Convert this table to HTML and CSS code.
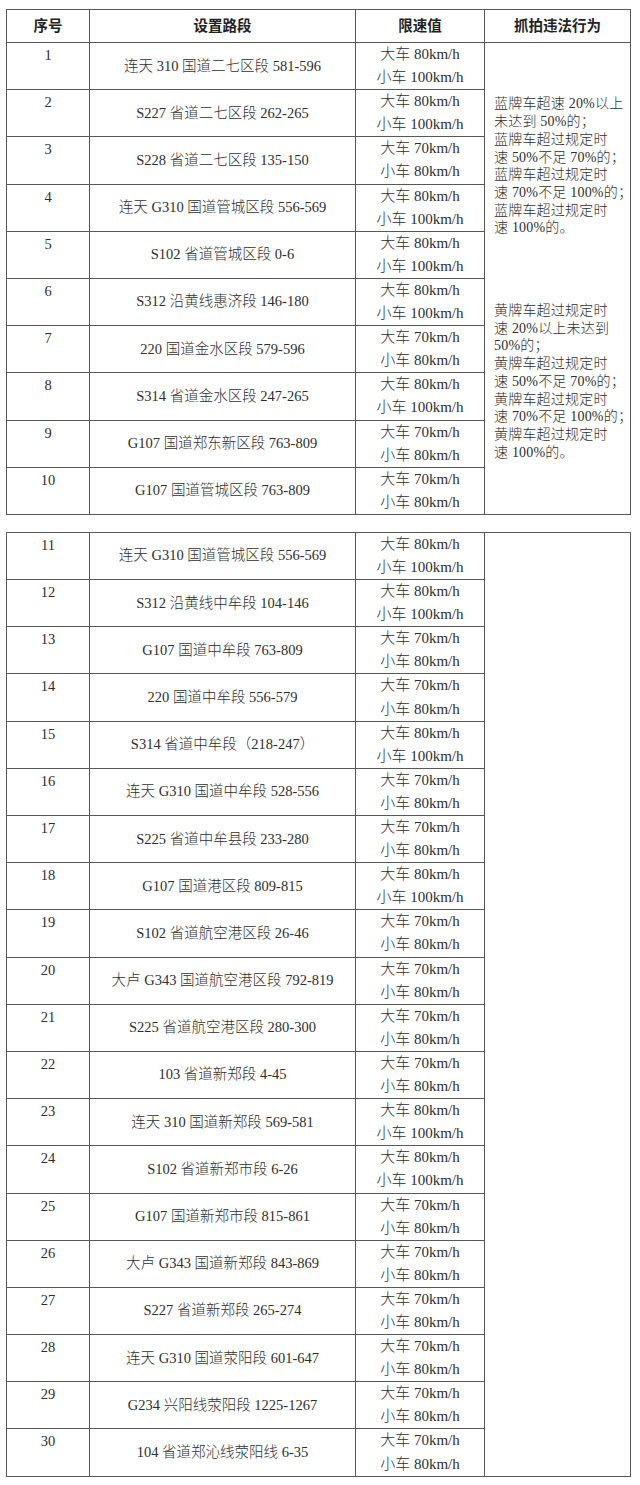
FILE: index.html
```html
<!DOCTYPE html>
<html lang="zh-CN">
<head>
<meta charset="utf-8">
<title>限速路段</title>
<link rel="stylesheet" href="styles.css">
</head>
<body>
<table class="grid">
<colgroup><col class="c-no"><col class="c-road"><col class="c-speed"><col class="c-act"></colgroup>
<thead>
<tr><th>序号</th><th>设置路段</th><th>限速值</th><th>抓拍违法行为</th></tr>
</thead>
<tbody>
<tr><td class="no">1</td><td class="road">连天 310 国道二七区段 581-596</td><td class="speed">大车 80km/h<br>小车 100km/h</td>
<td class="act" rowspan="10">
<div class="blk">蓝牌车超速 20%以上<br>未达到 50%的；<br>蓝牌车超过规定时<br>速 50%不足 70%的；<br>蓝牌车超过规定时<br>速 70%不足 100%的；<br>蓝牌车超过规定时<br>速 100%的。</div>
<div class="blk blk2">黄牌车超过规定时<br>速 20%以上未达到<br>50%的；<br>黄牌车超过规定时<br>速 50%不足 70%的；<br>黄牌车超过规定时<br>速 70%不足 100%的；<br>黄牌车超过规定时<br>速 100%的。</div>
</td></tr>
<tr><td class="no">2</td><td class="road">S227 省道二七区段 262-265</td><td class="speed">大车 80km/h<br>小车 100km/h</td></tr>
<tr><td class="no">3</td><td class="road">S228 省道二七区段 135-150</td><td class="speed">大车 70km/h<br>小车 80km/h</td></tr>
<tr><td class="no">4</td><td class="road">连天 G310 国道管城区段 556-569</td><td class="speed">大车 80km/h<br>小车 100km/h</td></tr>
<tr><td class="no">5</td><td class="road">S102 省道管城区段 0-6</td><td class="speed">大车 80km/h<br>小车 100km/h</td></tr>
<tr><td class="no">6</td><td class="road">S312 沿黄线惠济段 146-180</td><td class="speed">大车 80km/h<br>小车 100km/h</td></tr>
<tr><td class="no">7</td><td class="road">220 国道金水区段 579-596</td><td class="speed">大车 70km/h<br>小车 80km/h</td></tr>
<tr><td class="no">8</td><td class="road">S314 省道金水区段 247-265</td><td class="speed">大车 80km/h<br>小车 100km/h</td></tr>
<tr><td class="no">9</td><td class="road">G107 国道郑东新区段 763-809</td><td class="speed">大车 70km/h<br>小车 80km/h</td></tr>
<tr><td class="no">10</td><td class="road">G107 国道管城区段 763-809</td><td class="speed">大车 70km/h<br>小车 80km/h</td></tr>
</tbody>
</table>

<table class="grid second">
<colgroup><col class="c-no"><col class="c-road"><col class="c-speed"><col class="c-act"></colgroup>
<tbody>
<tr><td class="no">11</td><td class="road">连天 G310 国道管城区段 556-569</td><td class="speed">大车 80km/h<br>小车 100km/h</td><td class="act" rowspan="20"></td></tr>
<tr><td class="no">12</td><td class="road">S312 沿黄线中牟段 104-146</td><td class="speed">大车 80km/h<br>小车 100km/h</td></tr>
<tr><td class="no">13</td><td class="road">G107 国道中牟段 763-809</td><td class="speed">大车 70km/h<br>小车 80km/h</td></tr>
<tr><td class="no">14</td><td class="road">220 国道中牟段 556-579</td><td class="speed">大车 70km/h<br>小车 80km/h</td></tr>
<tr><td class="no">15</td><td class="road">S314 省道中牟段（218-247）</td><td class="speed">大车 80km/h<br>小车 100km/h</td></tr>
<tr><td class="no">16</td><td class="road">连天 G310 国道中牟段 528-556</td><td class="speed">大车 70km/h<br>小车 80km/h</td></tr>
<tr><td class="no">17</td><td class="road">S225 省道中牟县段 233-280</td><td class="speed">大车 70km/h<br>小车 80km/h</td></tr>
<tr><td class="no">18</td><td class="road">G107 国道港区段 809-815</td><td class="speed">大车 80km/h<br>小车 100km/h</td></tr>
<tr><td class="no">19</td><td class="road">S102 省道航空港区段 26-46</td><td class="speed">大车 70km/h<br>小车 80km/h</td></tr>
<tr><td class="no">20</td><td class="road">大卢 G343 国道航空港区段 792-819</td><td class="speed">大车 70km/h<br>小车 80km/h</td></tr>
<tr><td class="no">21</td><td class="road">S225 省道航空港区段 280-300</td><td class="speed">大车 70km/h<br>小车 80km/h</td></tr>
<tr><td class="no">22</td><td class="road">103 省道新郑段 4-45</td><td class="speed">大车 70km/h<br>小车 80km/h</td></tr>
<tr><td class="no">23</td><td class="road">连天 310 国道新郑段 569-581</td><td class="speed">大车 80km/h<br>小车 100km/h</td></tr>
<tr><td class="no">24</td><td class="road">S102 省道新郑市段 6-26</td><td class="speed">大车 80km/h<br>小车 100km/h</td></tr>
<tr><td class="no">25</td><td class="road">G107 国道新郑市段 815-861</td><td class="speed">大车 70km/h<br>小车 80km/h</td></tr>
<tr><td class="no">26</td><td class="road">大卢 G343 国道新郑段 843-869</td><td class="speed">大车 70km/h<br>小车 80km/h</td></tr>
<tr><td class="no">27</td><td class="road">S227 省道新郑段 265-274</td><td class="speed">大车 70km/h<br>小车 80km/h</td></tr>
<tr><td class="no">28</td><td class="road">连天 G310 国道荥阳段 601-647</td><td class="speed">大车 70km/h<br>小车 80km/h</td></tr>
<tr><td class="no">29</td><td class="road">G234 兴阳线荥阳段 1225-1267</td><td class="speed">大车 70km/h<br>小车 80km/h</td></tr>
<tr><td class="no">30</td><td class="road">104 省道郑沁线荥阳线 6-35</td><td class="speed">大车 70km/h<br>小车 80km/h</td></tr>
</tbody>
</table>
</body>
</html>
```

FILE: styles.css
```css
html, body {
  margin: 0;
  padding: 0;
  background: #ffffff;
}

body {
  color: #2e2e2e;
  font-family: "Liberation Serif", "Noto Sans CJK SC", serif;
  font-weight: 300;
}

.grid {
  border-collapse: collapse;
  table-layout: fixed;
  width: 624px;
  margin: 9px 0 0 6px;
}

.grid.second {
  margin-top: 17px;
}

.c-no { width: 83px; }
.c-road { width: 266px; }
.c-speed { width: 129px; }
.c-act { width: 146px; }

.grid th,
.grid td {
  border: 1px solid #585858;
  padding: 0;
  text-align: center;
}

.grid th {
  height: 32px;
  line-height: 32px;
  font-size: 14.5px;
  font-weight: 700;
  color: #222;
}

.grid td {
  line-height: 23.1px;
}

.grid td.no {
  vertical-align: top;
  font-size: 14.5px;
  padding-top: 1px;
}

.road {
  vertical-align: middle;
  font-size: 14.5px;
  white-space: nowrap;
}

.speed {
  vertical-align: middle;
  font-size: 15px;
  white-space: nowrap;
}

.grid td.act {
  text-align: left;
  vertical-align: middle;
  padding-left: 9px;
}

.blk {
  font-size: 14px;
  line-height: 17.7px;
  letter-spacing: 0.2px;
  white-space: nowrap;
}

.blk2 {
  margin-top: 65px;
}
```
